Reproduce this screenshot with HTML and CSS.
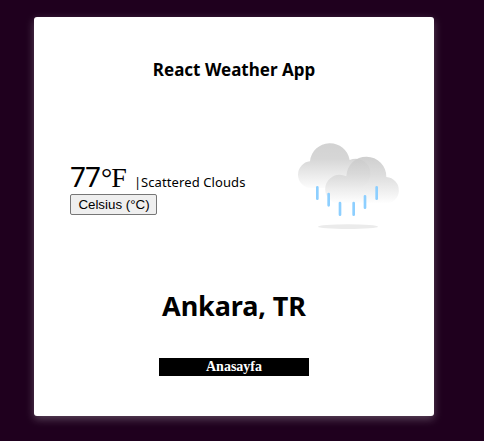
FILE: index.html
```html
<!DOCTYPE html>
<html lang="en">
<head>
<meta charset="utf-8">
<title>React Weather App</title>
<link rel="stylesheet" href="styles.css">
</head>
<body>
<main class="card">
  <h1 class="title">React Weather App</h1>
  <section class="weather">
    <div class="details">
      <div class="reading"><span class="degrees">77</span><span class="unit">°F</span><span class="bar">|</span><span class="summary">Scattered Clouds</span></div>
      <button class="toggle" type="button"><span>Celsius (°C)</span></button>
    </div>
    <svg class="icon" viewBox="0 0 360 330" aria-hidden="true">
      <defs>
        <linearGradient id="back" gradientUnits="userSpaceOnUse" x1="0" y1="38" x2="0" y2="174"><stop offset="0" stop-color="#d2d2d2"/><stop offset=".35" stop-color="#d6d6d6"/><stop offset="1" stop-color="#fcfcfc"/></linearGradient>
        <linearGradient id="front" gradientUnits="userSpaceOnUse" x1="0" y1="86" x2="0" y2="221"><stop offset="0" stop-color="#cacaca" stop-opacity=".88"/><stop offset=".35" stop-color="#d6d6d6" stop-opacity=".84"/><stop offset="1" stop-color="#fff" stop-opacity=".9"/></linearGradient>
      </defs>
      <path fill="url(#back)" d="M63 174A40 40 0 0 1 24 134A40 40 0 0 1 60 94A60 60 0 0 1 179 90A44 44 0 1 1 198 174Z"/>
      <path fill="url(#front)" d="M149 221A43 43 0 0 1 149 134Q159 134 169 139A60 60 0 0 1 289 141A40 40 0 0 1 284 221Z"/>
      <path stroke="#8dcfff" stroke-width="8" stroke-linecap="round" d="M82 172v34M116 192v34M150 219v35M191 219v35M225 199v34M260 172v34"/>
      <ellipse cx="174" cy="290" rx="90" ry="7" fill="#ebebeb"/>
    </svg>
  </section>
  <h2 class="city">Ankara, TR</h2>
  <a class="home">Anasayfa</a>
</main>
</body>
</html>
```
FILE: styles.css
```css
* { box-sizing: border-box; }
body {
  margin: 0;
  height: 441px;
  padding: 17px 0 0 34px;
  overflow: hidden;
  background: #1f001e;
  color: #000;
  font-family: "Noto Sans", "Open Sans", sans-serif;
}
.card {
  display: flex;
  flex-direction: column;
  align-items: center;
  width: 400px;
  height: 399px;
  padding-top: 41px;
  border-radius: 3px;
  background: #fff;
  box-shadow: 0 3px 8px rgba(255, 255, 255, .27);
}
.title {
  margin: 0;
  font-size: 17px;
  line-height: 24px;
  font-weight: 700;
  white-space: nowrap;
}
.weather {
  display: flex;
  justify-content: space-between;
  width: 400px;
  height: 110px;
  margin-top: 48px;
  padding: 0 24px 0 36px;
}
.icon { width: 120px; height: 110px; }
.details { padding-top: 28px; }
.reading {
  display: flex;
  align-items: baseline;
  height: 36px;
  line-height: 36px;
  white-space: nowrap;
}
.degrees { width: 31px; font-size: 28px; font-weight: 400; letter-spacing: -1px; }
.unit { width: 33px; font: 28px/36px "Liberation Serif", serif; letter-spacing: -1px; }
.bar { width: 7px; font-size: 13px; }
.summary { font-size: 13px; letter-spacing: .1px; }
.toggle {
  display: block;
  width: 87px;
  height: 21px;
  padding: 0 0 0 1px;
  border: 1px solid #767676;
  border-radius: 2px;
  background: #efefef;
  color: #000;
  font: 13.333px/18px "Liberation Sans", sans-serif;
  white-space: nowrap;
}
.city {
  margin: 47px 0 0;
  font-size: 27px;
  line-height: 38px;
  font-weight: 700;
  letter-spacing: -.1px;
}
.home {
  width: 150px;
  height: 18px;
  margin-top: 33px;
  background: #000;
  color: #fff;
  font: bold 14px/17px "Liberation Serif", serif;
  text-align: center;
}
```
